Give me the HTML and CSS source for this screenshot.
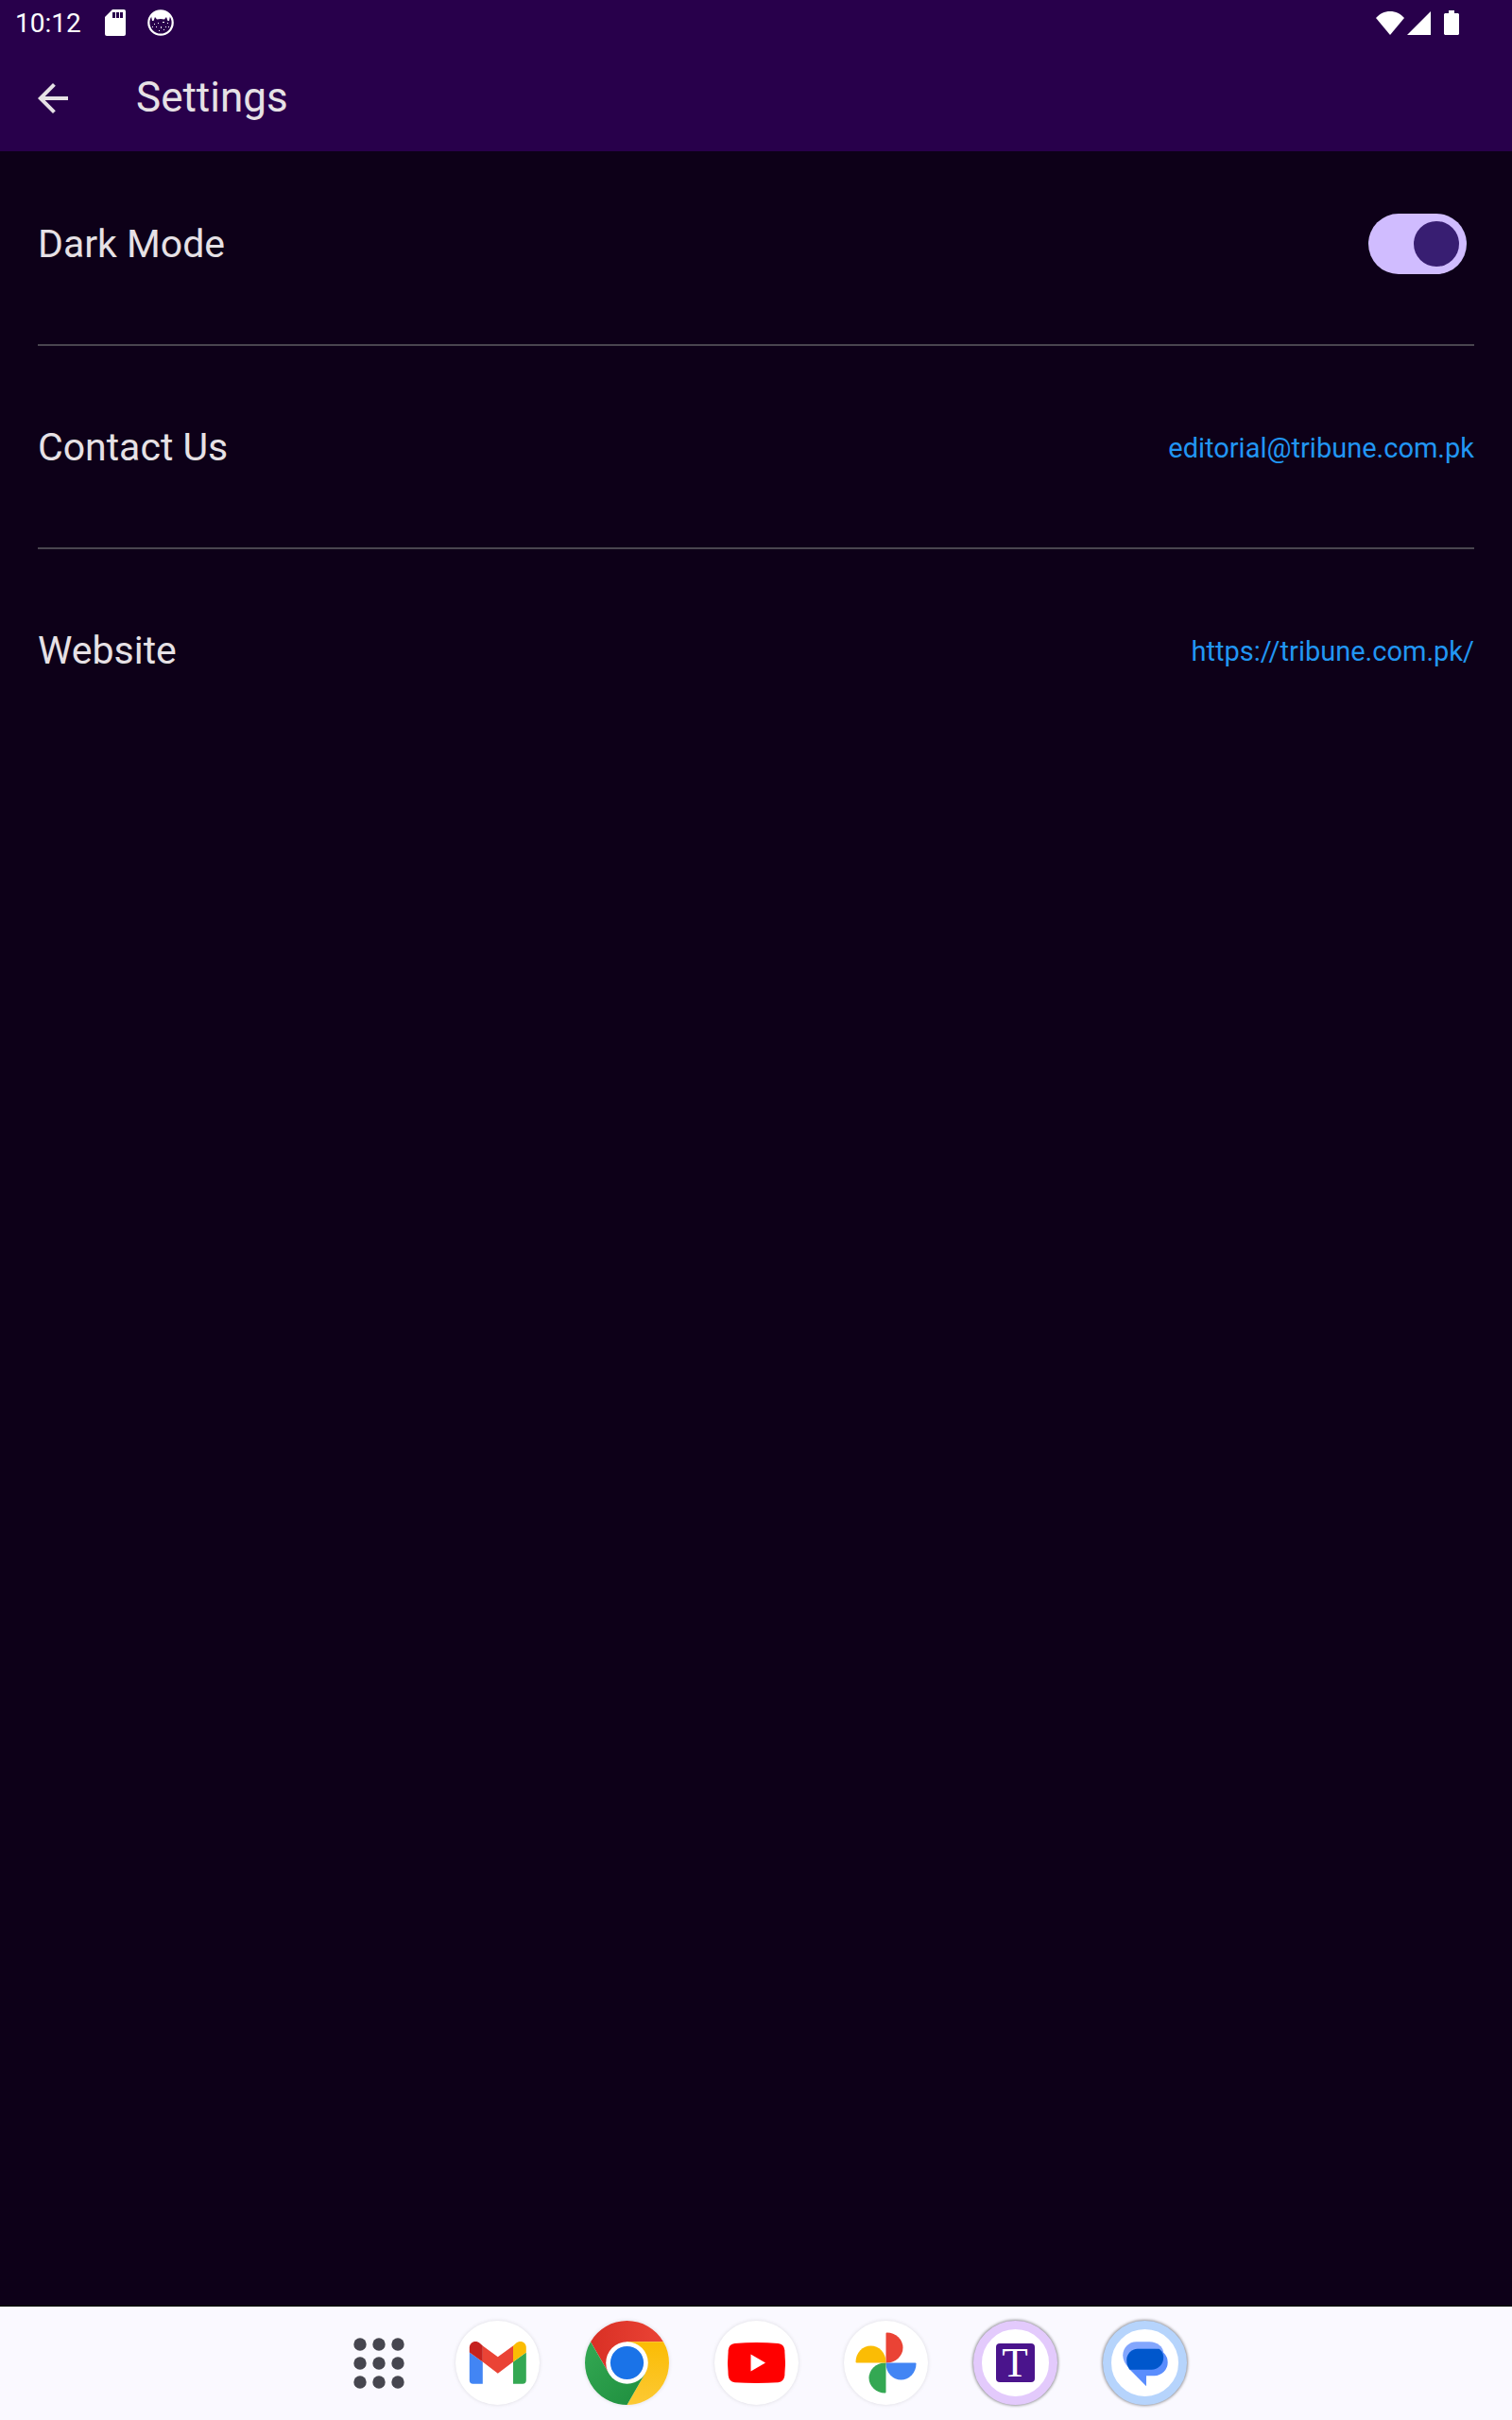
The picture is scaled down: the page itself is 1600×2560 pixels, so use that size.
FILE: index.html
```html
<!DOCTYPE html>
<html lang="en">
<head>
  <meta charset="utf-8">
  <meta name="viewport" content="width=device-width, initial-scale=1">
  <title>Settings</title>
  <link rel="stylesheet" href="styles.css">
</head>
<body>
  <header class="top">
    <div class="status">
      <div class="status-left">
        <time class="clock">10:12</time>
        <svg class="sd" viewBox="0 0 22 28" aria-hidden="true">
          <path fill="#fff" d="M8 0H20a2 2 0 0 1 2 2V26a2 2 0 0 1-2 2H2a2 2 0 0 1-2-2V8Z"/>
          <path fill="#28004b" d="M8 3h3v6H8zM12 3h3v6h-3zM16 3h3v6h-3z"/>
        </svg>
        <svg class="cat" viewBox="0 0 28 28" aria-hidden="true">
          <circle cx="14" cy="14" r="12.7" fill="none" stroke="#fff" stroke-width="2.2"/>
          <path fill="#fff" d="M4 7C7 3 10 1 14 1s7 2 10 6l-1 5h-1.500L20 8l-2 2.500c-3-.7-5-.7-8 0L8 8l-1.500 4H5Z"/>
          <path fill="#fff" d="M7 15h1v1H7zM11 14h1v1h-1zM16 13h2v1h-2zM21 14h1v1h-1zM9 18h1v1H9zM14 18h1v2h-1zM19 18h1v1h-1zM12 22h1v1h-1zM17 21h1v1h-1zM5 18h1v1H5zM22 18h1v1h-1z"/>
        </svg>
      </div>
      <div class="status-right">
        <svg class="wifi" viewBox="0 0 30 25" aria-hidden="true"><path fill="#fff" d="M15 25 0 7C4 2.500 9 0 15 0s11 2.500 15 7Z"/></svg>
        <svg class="signal" viewBox="0 0 25 25" aria-hidden="true"><path fill="#fff" d="M25 0V25H0Z"/></svg>
        <svg class="battery" viewBox="0 0 16 26" aria-hidden="true"><path fill="#fff" d="M5 0h6v3h4l1 1v21l-1 1H1l-1-1V4l1-1h4Z"/></svg>
      </div>
    </div>
    <div class="app-bar">
      <button class="back" type="button" aria-label="Back">
        <svg viewBox="0 0 24 24" aria-hidden="true"><path fill="#e6e1e5" d="M20 11H7.830l5.590-5.590L12 4l-8 8 8 8 1.410-1.410L7.830 13H20v-2z"/></svg>
      </button>
      <h1 class="title">Settings</h1>
    </div>
  </header>

  <main class="settings">
    <div class="row">
      <label class="label" for="dark-mode">Dark Mode</label>
      <input class="switch" id="dark-mode" type="checkbox" role="switch" checked>
    </div>
    <hr class="divider">
    <div class="row">
      <span class="label">Contact Us</span>
      <a class="link" href="mailto:editorial@tribune.com.pk">editorial@tribune.com.pk</a>
    </div>
    <hr class="divider">
    <div class="row">
      <span class="label">Website</span>
      <a class="link" href="https://tribune.com.pk/">https://tribune.com.pk/</a>
    </div>
  </main>

  <nav class="taskbar" aria-label="Taskbar">
    <button class="all-apps" type="button" aria-label="All apps">
      <svg viewBox="0 0 54 54" fill="#46464f" aria-hidden="true">
        <circle cx="7" cy="7" r="6.700"/><circle cx="27" cy="7" r="6.700"/><circle cx="47" cy="7" r="6.700"/>
        <circle cx="7" cy="27" r="6.700"/><circle cx="27" cy="27" r="6.700"/><circle cx="47" cy="27" r="6.700"/>
        <circle cx="7" cy="47" r="6.700"/><circle cx="27" cy="47" r="6.700"/><circle cx="47" cy="47" r="6.700"/>
      </svg>
    </button>
    <div class="apps">
      <button class="app" type="button" aria-label="Gmail">
        <svg viewBox="-44.500 -44.500 89 89" aria-hidden="true">
          <path fill="#4285f4" d="M-29.700-11-15.700-1V22.300H-26a3.700 3.700 0 0 1-3.700-3.700Z"/>
          <path fill="#34a853" d="M30.300-11 16.500-1V22.300H26.600a3.700 3.700 0 0 0 3.700-3.700Z"/>
          <path fill="#ea4335" d="M-15.700-18 .3-6.300 16.500-18V-1L.3 11.300-15.700-1Z"/>
          <path fill="#c5221f" d="M-29.700-11V-16C-29.700-22-23-24.500-18.500-20.500L-15.700-18V-1Z"/>
          <path fill="#fbbc04" d="M30.300-11V-16C30.300-22 24-24.500 19.300-20.500L16.500-18V-1Z"/>
        </svg>
      </button>
      <button class="app" type="button" aria-label="Chrome">
        <svg viewBox="-44.500 -44.500 89 89" aria-hidden="true">
          <defs>
            <linearGradient id="red"><stop offset="0" stop-color="#d93025"/><stop offset="1" stop-color="#ea4335"/></linearGradient>
            <linearGradient id="yellow" x1="0" y1="1" x2="0" y2="0"><stop offset="0" stop-color="#fcc934"/><stop offset="1" stop-color="#fbbc04"/></linearGradient>
            <linearGradient id="green" x1="1" y1="1" x2="0" y2="0"><stop offset="0" stop-color="#1e8e3e"/><stop offset="1" stop-color="#34a853"/></linearGradient>
          </defs>
          <path fill="url(#red)" d="M-38.500-22.300A44.500 44.500 0 0 1 38.500-22.300H0L-19.300 11.100Z"/>
          <path fill="url(#yellow)" d="M38.500-22.300A44.500 44.500 0 0 1 0 44.500L19.300 11.100 0-22.300Z"/>
          <path fill="url(#green)" d="M0 44.500A44.500 44.500 0 0 1-38.500-22.300L-19.300 11.100H19.300Z"/>
          <circle r="22.300" fill="#fff"/>
          <circle r="17.600" fill="#1a73e8"/>
        </svg>
      </button>
      <button class="app" type="button" aria-label="YouTube">
        <svg viewBox="-44.500 -44.500 89 89" aria-hidden="true">
          <path fill="#f00" d="M-23-20.500Q0-22.300 23-20.500 29-20 29.800-13.500 31.200 0 29.800 13.500 29 20 23 20.700 0 22.300-23 20.700-29 20-29.800 13.500-31.200 0-29.800-13.500-29-20-23-20.500Z"/>
          <path fill="#fff" d="M-6-9 9.500 0-6 9Z"/>
        </svg>
      </button>
      <button class="app" type="button" aria-label="Photos">
        <svg viewBox="-44.500 -44.500 89 89" aria-hidden="true">
          <path fill="#ea4335" d="M0 0V-31Q0-32 1-32A17 16 0 0 1 1 0Z"/>
          <path fill="#4285f4" d="M0 0H31Q32 0 32 1A16 17 0 0 1 0 1Z"/>
          <path fill="#34a853" d="M0 0V31Q0 32-1 32A17 16 0 0 1-1 0Z"/>
          <path fill="#fbbc04" d="M0 0H-31Q-32 0-32-1A16 17 0 0 1 0-1Z"/>
        </svg>
      </button>
      <button class="app ringed ring-purple" type="button" aria-label="Tribune">
        <span class="tribune">T</span>
      </button>
      <button class="app ringed ring-blue" type="button" aria-label="Messages">
        <svg viewBox="-44.500 -44.500 89 89" aria-hidden="true">
          <path fill="#83a6fd" d="M-9-22.300H5C13-22.300 19.300-17 19.700-11L-17 5.500C-21 1-23.300-3-23.300-8-23.300-16-17-22.300-9-22.300Z"/>
          <path fill="#5a8dfd" d="M-8-14.700H10A14.200 14.200 0 0 1 10 13.700H1.500V24.700L-17 6Z"/>
          <path fill="#0057cc" d="M-8-14.700H15C18-13 19.700-9 19.700-5.500 19.700 1.500 14 7.300 7 7.300H-16C-18.500 4-19.300 1-19.300-3-19.300-9.500-14-14.700-8-14.700Z"/>
        </svg>
      </button>
    </div>
  </nav>
</body>
</html>
```
FILE: styles.css
```css
* {
  box-sizing: border-box;
}

body {
  margin: 0;
  min-height: 100vh;
  display: flex;
  flex-direction: column;
  background: #0d0018;
  color: #e6e1e5;
  font-family: Roboto, sans-serif;
}

button {
  padding: 0;
  border: 0;
  background: none;
  cursor: pointer;
}

svg {
  display: block;
}

.top {
  background: #28004b;
}

.status {
  height: 48px;
  padding: 0 56px 0 16px;
  display: flex;
  align-items: center;
  justify-content: space-between;
}

.status-left,
.status-right {
  display: flex;
  align-items: center;
}

.clock {
  color: #fff;
  font-size: 28px;
  line-height: 48px;
  padding-top: 2px;
}

.sd {
  width: 22px;
  height: 28px;
  margin-left: 25px;
}

.cat {
  width: 28px;
  height: 28px;
  margin-left: 23px;
}

.wifi {
  width: 30px;
  height: 25px;
}

.signal {
  width: 25px;
  height: 25px;
  margin-left: 3px;
}

.battery {
  width: 16px;
  height: 26px;
  margin-left: 14px;
}

.app-bar {
  height: 112px;
  padding: 0 32px;
  display: flex;
  align-items: center;
  gap: 64px;
}

.back,
.back svg {
  width: 48px;
  height: 48px;
}

.title {
  margin: 0;
  padding-bottom: 2px;
  font-size: 44px;
  font-weight: 400;
  line-height: 56px;
}

.settings {
  flex: 1;
  padding: 40px;
}

.row {
  min-height: 115px;
  display: flex;
  align-items: center;
  justify-content: space-between;
  gap: 32px;
}

.label {
  font-size: 41px;
  line-height: 48px;
}

.link {
  padding-top: 2px;
  color: #2196f3;
  font-size: 29px;
  line-height: 40px;
  text-decoration: none;
}

.divider {
  height: 2px;
  margin: 49px 0;
  border: 0;
  background: #49454f;
}

.switch {
  appearance: none;
  width: 104px;
  height: 64px;
  margin: 0 8px;
  padding: 8px;
  border-radius: 32px;
  background: #49454f;
  display: flex;
  cursor: pointer;
}

.switch::before {
  content: "";
  width: 48px;
  height: 48px;
  border-radius: 50%;
  background: #938f99;
}

.switch:checked {
  background: #d0bcff;
  justify-content: flex-end;
}

.switch:checked::before {
  background: #381e72;
}

.taskbar {
  min-height: 120px;
  padding-bottom: 1px;
  display: flex;
  align-items: center;
  justify-content: center;
  gap: 25px;
  background: #faf9ff;
  box-shadow: 0 -1px #000;
}

.all-apps {
  width: 112px;
  height: 89px;
  display: flex;
  align-items: center;
  justify-content: center;
}

.all-apps svg {
  width: 54px;
  height: 54px;
}

.apps {
  display: flex;
  gap: 48px;
}

.app {
  width: 89px;
  height: 89px;
  border-radius: 50%;
  background: #fff;
  display: flex;
  align-items: center;
  justify-content: center;
  box-shadow: 0 0 4px rgba(0, 0, 0, 0.12);
}

.app svg {
  width: 89px;
  height: 89px;
  flex: none;
}

.ringed {
  box-shadow: 0 0 3px 1px rgba(0, 0, 0, 0.4);
}

.ring-purple {
  border: 9px solid #e3cafc;
}

.ring-blue {
  border: 9px solid #b6d4fc;
}

.tribune {
  width: 41px;
  height: 41px;
  border-radius: 4px;
  background: #4a148c;
  color: #fff;
  font-family: "Liberation Serif", serif;
  font-size: 45px;
  line-height: 41px;
  text-align: center;
}
```
